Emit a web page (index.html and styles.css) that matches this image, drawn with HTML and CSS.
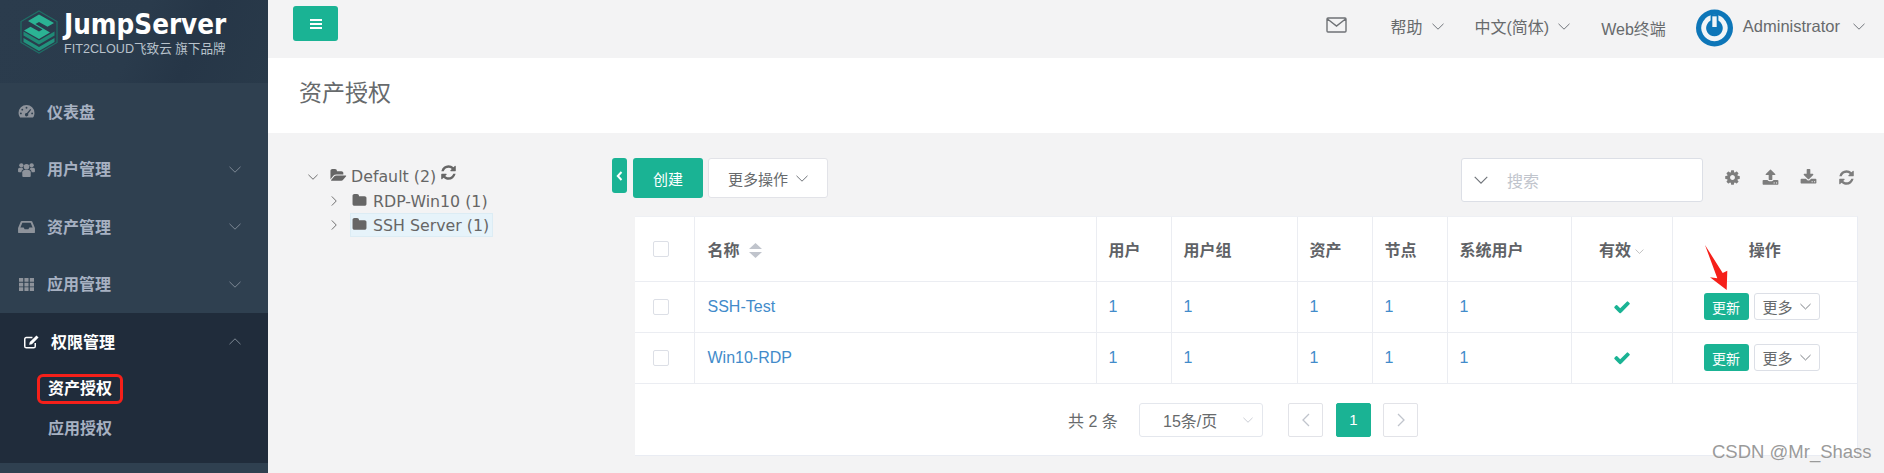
FILE: index.html
```html
<!DOCTYPE html>
<html lang="zh">
<head>
<meta charset="utf-8">
<title>资产授权</title>
<link rel="stylesheet" href="styles.css">
</head>
<body>
<svg class="defs" width="0" height="0">
  <symbol id="down" viewBox="0 0 12 7"><path d="M.5.8 6 6.200 11.500.8" fill="none" stroke="currentColor" stroke-width="1"/></symbol>
  <symbol id="up" viewBox="0 0 12 7"><path d="M.5 6.200 6 .8l5.500 5.400" fill="none" stroke="currentColor" stroke-width="1"/></symbol>
  <symbol id="refresh" viewBox="0 0 1792 1792"><path fill="currentColor" d="M1639 1056q0 5-1 7-64 268-268 434.500t-478 166.500q-146 0-282.500-55t-243.500-157l-129 129q-19 19-45 19t-45-19-19-45v-448q0-26 19-45t45-19h448q26 0 45 19t19 45-19 45l-137 137q71 66 161 102t187 36q134 0 250-65t186-179q11-17 53-117 8-23 30-23h192q13 0 22.500 9.500t9.500 22.500zm25-800v448q0 26-19 45t-45 19h-448q-26 0-45-19t-19-45 19-45l138-138q-148-137-349-137-134 0-250 65t-186 179q-11 17-53 117-8 23-30 23h-199q-13 0-22.500-9.500t-9.500-22.500v-7q65-268 270-434.500t480-166.500q146 0 284 55.500t245 156.500l130-129q19-19 45-19t45 19 19 45z"/></symbol>
  <symbol id="folder" viewBox="0 0 1792 1792"><path fill="currentColor" d="M1728 608v704q0 92-66 158t-158 66h-1216q-92 0-158-66t-66-158v-960q0-92 66-158t158-66h320q92 0 158 66t66 158v32h672q92 0 158 66t66 158z"/></symbol>
  <symbol id="check" viewBox="0 0 1792 1792"><path fill="currentColor" d="M1671 566q0 40-28 68l-724 724-136 136q-28 28-68 28t-68-28l-136-136-362-362q-28-28-28-68t28-68l136-136q28-28 68-28t68 28l294 295 656-657q28-28 68-28t68 28l136 136q28 28 28 68z"/></symbol>
</svg>
<div class="app">
  <aside class="sidebar">
    <div class="brand">
      <svg class="brand-mark" viewBox="0 0 38 44">
        <path d="M19 1 37 11.500v21L19 43 1 32.500v-21z" fill="none" stroke="#1f6f66" stroke-width="1.200"/>
        <path d="M3.500 28l15.500 9 15.500-9v4L19 41 3.500 32z" fill="#22927d"/>
        <path d="M3.500 21.500l15.500 9 15.500-9v4L19 34.500 3.500 25.500z" fill="#1f8a76"/>
        <path d="M19 4.500 34 13l-6.500 3.800L19 12l-3.500 2L30 22.500 24 26 19 29 4 20.500l6.500-3.800L19 21.500l3.500-2L8 11z" fill="#2bb394"/>
      </svg>
      <div class="brand-text">
        <div class="brand-name">JumpServer</div>
        <div class="brand-sub">FIT2CLOUD飞致云 旗下品牌</div>
      </div>
    </div>
    <nav class="menu">
      <a class="menu-item">
        <svg class="menu-icon" viewBox="0 0 18 16"><path fill="currentColor" fill-rule="evenodd" d="M9 1a8.500 8.500 0 0 1 8.500 8.500c0 1.900-.6 3.600-1.600 5H2.100A8.400 8.400 0 0 1 .5 9.500 8.500 8.500 0 0 1 9 1zM9 3a1 1 0 1 0 0 2 1 1 0 0 0 0-2zM4.500 5a1 1 0 1 0 0 2 1 1 0 0 0 0-2zM3 9a1 1 0 1 0 0 2 1 1 0 0 0 0-2zm12 0a1 1 0 1 0 0 2 1 1 0 0 0 0-2zm-2-3.600L9.400 9.600a1.800 1.800 0 1 0 1.300.9L14 6.200z"/></svg>
        <span class="menu-label">仪表盘</span>
      </a>
      <a class="menu-item">
        <svg class="menu-icon" viewBox="0 0 18 16"><g fill="currentColor"><circle cx="9" cy="5" r="3"/><circle cx="3.500" cy="3.500" r="2.300"/><circle cx="14.500" cy="3.500" r="2.300"/><path d="M4.500 15v-4c0-1.500 1-2.500 2.500-2.500h4c1.500 0 2.500 1 2.500 2.500v4c0 .6-.4 1-1 1h-7c-.6 0-1-.4-1-1z"/><path d="M0 10V8c0-1 .7-1.800 1.700-1.800h3.100C5 7 5.400 7.400 5.800 7.800 4.500 8.300 3.700 9.300 3.500 10.800H1c-.6 0-1-.3-1-.8zM18 10V8c0-1-.7-1.800-1.700-1.800h-3.100c-.2.800-.6 1.200-1 1.600 1.300.5 2.100 1.500 2.300 3H17c.6 0 1-.3 1-.8z"/></g></svg>
        <span class="menu-label">用户管理</span>
        <svg class="menu-arrow"><use href="#down"/></svg>
      </a>
      <a class="menu-item">
        <svg class="menu-icon" viewBox="0 0 18 16"><path fill="currentColor" fill-rule="evenodd" d="M4 2h10c.5 0 .9.300 1.100.700L18 9.500V14c0 .6-.4 1-1 1H1c-.6 0-1-.4-1-1V9.500l2.900-6.800C3.100 2.300 3.500 2 4 2zM4.600 4 2.500 9H6l1 2h4l1-2h3.500l-2.100-5z"/></svg>
        <span class="menu-label">资产管理</span>
        <svg class="menu-arrow"><use href="#down"/></svg>
      </a>
      <a class="menu-item">
        <svg class="menu-icon" viewBox="0 0 18 16"><path fill="currentColor" d="M1 1h4.500v4H1zM6.800 1h4.400v4H6.800zM12.500 1H17v4h-4.500zM1 6h4.500v4H1zM6.800 6h4.400v4H6.800zM12.500 6H17v4h-4.500zM1 11h4.500v4H1zM6.800 11h4.400v4H6.800zM12.500 11H17v4h-4.500z"/></svg>
        <span class="menu-label">应用管理</span>
        <svg class="menu-arrow"><use href="#down"/></svg>
      </a>
      <div class="menu-group">
        <a class="menu-item menu-item-active">
          <svg class="menu-icon" viewBox="0 0 18 16"><path fill="none" stroke="currentColor" stroke-width="1.600" d="M13 9.500V13c0 1-.6 1.700-1.700 1.700H3.500c-1 0-1.700-.7-1.700-1.700V5.500c0-1 .7-1.700 1.700-1.700H10"/><path fill="currentColor" d="M14.300 1.500l2.200 2.200L9.500 10.800l-3 .7.700-3z"/></svg>
          <span class="menu-label">权限管理</span>
          <svg class="menu-arrow"><use href="#up"/></svg>
        </a>
        <div class="submenu">
          <a class="submenu-item submenu-current"><span class="highlight">资产授权</span></a>
          <a class="submenu-item">应用授权</a>
        </div>
      </div>
    </nav>
  </aside>
  <main class="main">
    <header class="topbar">
      <button class="menu-toggle"><svg class="bars" viewBox="0 0 14 12"><path fill="#fff" d="M1 1h12v2H1zM1 5h12v2H1zM1 9h12v2H1z"/></svg></button>
      <div class="topbar-right">
        <svg class="mail" viewBox="0 0 21 16"><path fill="none" stroke="currentColor" stroke-width="1.400" d="M2 1h17c.6 0 1 .4 1 1v12c0 .6-.4 1-1 1H2c-.6 0-1-.4-1-1V2c0-.6.4-1 1-1zM1.500 2l9 7 9-7"/></svg>
        <span class="top-link top-help">帮助<svg class="chev"><use href="#down"/></svg></span>
        <span class="top-link top-lang">中文(简体)<svg class="chev"><use href="#down"/></svg></span>
        <span class="top-link top-web">Web终端</span>
        <svg class="avatar" viewBox="0 0 38 38"><circle cx="19" cy="19" r="19" fill="#0d76b8"/><path d="M19 8a11 11 0 1 1-.1 0z" fill="none" stroke="#f1f5f7" stroke-width="5"/><path d="M19 5v13" stroke="#0d76b8" stroke-width="8"/><path d="M19 7v11" stroke="#f1f5f7" stroke-width="4.500"/></svg>
        <span class="top-link top-user">Administrator<svg class="chev chev-user"><use href="#down"/></svg></span>
      </div>
    </header>
    <section class="page-heading"><h2>资产授权</h2></section>
    <section class="content">
      <div class="tree">
        <div class="tree-row tree-root">
          <svg class="tree-arrow"><use href="#down"/></svg>
          <svg class="folder-open" viewBox="0 0 1920 1792"><path fill="currentColor" d="M1879 952q0 31-31 66l-336 396q-43 51-120.500 86.500t-143.500 35.500h-1088q-34 0-60.500-13t-26.500-43q0-31 31-66l336-396q43-51 120.500-86.500t143.500-35.500h1088q34 0 60.500 13t26.500 43zm-343-344v160h-832q-94 0-197 47.500t-164 119.500l-337 396-5 6q0-4-.5-12.500t-.5-12.500v-960q0-92 66-158t158-66h320q92 0 158 66t66 158v32h544q92 0 158 66t66 158z"/></svg>
          <span class="tree-name">Default (2)</span>
          <svg class="tree-refresh"><use href="#refresh"/></svg>
        </div>
        <div class="tree-row tree-child">
          <svg class="tree-arrow tree-arrow-right" viewBox="0 0 12 7"><use href="#down"/></svg>
          <span class="tree-node"><svg class="folder"><use href="#folder"/></svg><span class="tree-name">RDP-Win10 (1)</span></span>
        </div>
        <div class="tree-row tree-child">
          <svg class="tree-arrow tree-arrow-right" viewBox="0 0 12 7"><use href="#down"/></svg>
          <span class="tree-node tree-selected"><svg class="folder"><use href="#folder"/></svg><span class="tree-name">SSH Server (1)</span></span>
        </div>
      </div>
      <div class="panel">
        <div class="toolbar">
          <button class="collapse"><svg viewBox="0 0 7 10" class="collapse-icon"><path d="M5.500 1 1.800 5l3.700 4" fill="none" stroke="#fff" stroke-width="2"/></svg></button>
          <button class="btn btn-create">创建</button>
          <button class="btn btn-more">更多操作<svg class="chev"><use href="#down"/></svg></button>
          <div class="search">
            <svg class="chev chev-search"><use href="#down"/></svg>
            <span class="search-hint">搜索</span>
          </div>
          <div class="tools">
            <svg class="tool" viewBox="0 0 1792 1792"><path fill="currentColor" d="M1152 896q0-106-75-181t-181-75-181 75-75 181 75 181 181 75 181-75 75-181zm512-109v222q0 12-8 23t-20 13l-185 28q-19 54-39 91 35 50 107 138 10 12 10 25t-9 23q-27 37-99 108t-94 71q-12 0-26-9l-138-108q-44 23-91 38-16 136-29 186-7 28-36 28h-222q-14 0-24.500-8.500t-11.500-21.500l-28-184q-49-16-90-37l-141 107q-10 9-25 9-14 0-25-11-126-114-165-168-7-10-7-23 0-12 8-23 15-21 51-66.500t54-70.500q-27-50-41-99l-183-27q-13-2-21-12.500t-8-23.500v-222q0-12 8-23t19-13l186-28q14-46 39-92-40-57-107-138-10-12-10-24 0-10 9-23 26-36 98.500-107.500t94.500-71.500q13 0 26 10l138 107q44-23 91-38 16-136 29-186 7-28 36-28h222q14 0 24.500 8.500t11.500 21.500l28 184q49 16 90 37l142-107q9-9 24-9 13 0 25 10 129 119 165 170 7 8 7 22 0 12-8 23-15 21-51 66.500t-54 70.500q26 50 41 98l183 28q13 2 21 12.500t8 23.500z"/></svg>
            <svg class="tool" viewBox="0 0 1792 1792"><path fill="currentColor" d="M1344 1472q0-26-19-45t-45-19-45 19-19 45 19 45 45 19 45-19 19-45zm256 0q0-26-19-45t-45-19-45 19-19 45 19 45 45 19 45-19 19-45zm128-224v320q0 40-28 68t-68 28h-1472q-40 0-68-28t-28-68v-320q0-40 28-68t68-28h427q21 56 70.500 92t110.500 36h256q61 0 110.500-36t70.500-92h427q40 0 68 28t28 68zm-325-648q-17 40-59 40h-256v448q0 26-19 45t-45 19h-256q-26 0-45-19t-19-45v-448h-256q-42 0-59-40-17-39 14-69l448-448q18-19 45-19t45 19l448 448q31 30 14 69z"/></svg>
            <svg class="tool" viewBox="0 0 1792 1792"><path fill="currentColor" d="M1344 1344q0-26-19-45t-45-19-45 19-19 45 19 45 45 19 45-19 19-45zm256 0q0-26-19-45t-45-19-45 19-19 45 19 45 45 19 45-19 19-45zm128-224v320q0 40-28 68t-68 28h-1472q-40 0-68-28t-28-68v-320q0-40 28-68t68-28h465l135 136q58 56 136 56t136-56l136-136h464q40 0 68 28t28 68zm-325-569q17 41-14 70l-448 448q-18 19-45 19t-45-19l-448-448q-31-29-14-70 17-39 59-39h256v-448q0-26 19-45t45-19h256q26 0 45 19t19 45v448h256q42 0 59 39z"/></svg>
            <svg class="tool"><use href="#refresh"/></svg>
          </div>
        </div>
        <div class="card">
          <table class="grid">
            <colgroup>
              <col class="c-check"><col class="c-name"><col class="c-user"><col class="c-group"><col class="c-asset"><col class="c-node"><col class="c-sys"><col class="c-valid"><col class="c-act">
            </colgroup>
            <thead>
              <tr>
                <th class="cell-check"><span class="checkbox"></span></th>
                <th class="th-name">名称<svg class="sort" viewBox="0 0 13 15"><path fill="#c0c4cc" d="M6.500 0 13 6H0zM6.500 15 0 9h13z"/></svg></th>
                <th>用户</th><th>用户组</th><th>资产</th><th>节点</th><th>系统用户</th>
                <th class="cell-center">有效<svg class="th-chev"><use href="#down"/></svg></th>
                <th class="cell-center">操作</th>
              </tr>
            </thead>
            <tbody>
              <tr>
                <td class="cell-check"><span class="checkbox"></span></td>
                <td class="link th-name">SSH-Test</td><td class="link">1</td><td class="link">1</td><td class="link">1</td><td class="link">1</td><td class="link">1</td>
                <td class="cell-center"><svg class="ok"><use href="#check"/></svg></td>
                <td class="cell-center"><div class="actions"><button class="act-update">更新</button><button class="act-more">更多<svg class="chev"><use href="#down"/></svg></button></div></td>
              </tr>
              <tr>
                <td class="cell-check"><span class="checkbox"></span></td>
                <td class="link th-name">Win10-RDP</td><td class="link">1</td><td class="link">1</td><td class="link">1</td><td class="link">1</td><td class="link">1</td>
                <td class="cell-center"><svg class="ok"><use href="#check"/></svg></td>
                <td class="cell-center"><div class="actions"><button class="act-update">更新</button><button class="act-more">更多<svg class="chev"><use href="#down"/></svg></button></div></td>
              </tr>
            </tbody>
          </table>
          <div class="pager">
            <span class="total">共 2 条</span>
            <div class="size">15条/页<svg class="size-chev"><use href="#down"/></svg></div>
            <button class="page page-nav"><svg class="page-arrow" viewBox="0 0 8 14"><path d="M7 1 1 7l6 6" fill="none" stroke="currentColor" stroke-width="1.300"/></svg></button>
            <button class="page page-on">1</button>
            <button class="page page-nav"><svg class="page-arrow" viewBox="0 0 8 14"><path d="M1 1l6 6-6 6" fill="none" stroke="currentColor" stroke-width="1.300"/></svg></button>
          </div>
        </div>
      </div>
    </section>
  </main>
</div>
<svg class="red-arrow" viewBox="0 0 24 46"><path d="M0 0 17.700 28 22.300 25.700 21.700 45 5 32.300 12.300 33.300z" fill="#f5201a"/></svg>
<div class="watermark">CSDN @Mr_Shass</div>
</body>
</html>
```
FILE: styles.css
```css
* { box-sizing: border-box; }
html, body { margin: 0; height: 473px; overflow: hidden; }
body {
  background: #f3f3f4;
  color: #676a6c;
  font-family: "Liberation Sans", "Noto Sans CJK SC", sans-serif;
  font-size: 16px;
  position: relative;
}
button { font: inherit; cursor: pointer; }
.defs { position: absolute; }
.app { display: flex; height: 473px; }

/* Sidebar */
.sidebar { width: 268px; flex: none; background: #2f4050; display: flex; flex-direction: column; }
.brand {
  height: 83px;
  display: flex;
  align-items: flex-start;
  gap: 6px;
  padding: 10px 0 0 20px;
  background: linear-gradient(115deg, #2b3c4d 0%, #2a3b4c 50%, #263647 70%, #293a4a 100%);
}
.brand-mark { width: 38px; height: 44px; flex: none; }
.brand-name { font: 700 27.500px/28px "DejaVu Sans Condensed", "DejaVu Sans", sans-serif; color: #fff; }
.brand-sub { font-size: 12.600px; line-height: 16px; color: #b8c2cb; margin-top: 3px; white-space: nowrap; }
.menu { display: flex; flex-direction: column; }
.menu-item { height: 57.500px; display: flex; align-items: center; padding-left: 18px; padding-right: 27px; color: #a7b1c2; font-weight: 700; }
.menu-icon { width: 17px; height: 15px; flex: none; color: #8e939b; margin-right: 12px; }
.menu-label { flex: 1; padding-bottom: 2px; }
.menu-arrow { width: 12px; height: 7px; color: #7d8894; }
.menu-group { background: #202c3b; height: 150px; }
.menu-item-active { color: #fff; height: 56px; padding-left: 23px; }
.menu-item-active .menu-icon { color: #fff; margin-right: 11px; }
.menu-item-active .menu-label { padding-bottom: 0; }
.submenu-item { height: 39px; display: flex; align-items: center; padding-left: 48px; color: #a7b1c2; font-weight: 700; }
.submenu-item + .submenu-item { padding-bottom: 2px; }
.submenu-current { color: #fff; }
.highlight { margin-left: -11px; padding: 0 8px; height: 30px; line-height: 24px; border: 3px solid #f5201a; border-radius: 6px; }

/* Top bar */
.main { flex: 1; min-width: 0; display: flex; flex-direction: column; }
.topbar { height: 58px; display: flex; align-items: flex-start; justify-content: space-between; padding: 6px 19px 0 25px; }
.menu-toggle { width: 45px; height: 35px; background: #1ab394; border: 0; border-radius: 3px; display: flex; align-items: center; justify-content: center; padding: 0; }
.bars { width: 14px; height: 12px; }
.topbar-right { display: flex; align-items: center; height: 38px; margin-top: 1px; font-size: 16px; color: #676a6c; }
.mail { width: 21px; height: 16px; color: #6f7276; margin-right: 43px; margin-top: -2px; }
.top-link { display: flex; align-items: center; white-space: nowrap; }
.top-link .chev { margin-left: 9px; }
.top-help { margin-right: 31px; }
.top-lang { margin-right: 31px; }
.top-web { margin-right: 30px; margin-top: 3px; }
.avatar { width: 37px; height: 38px; flex: none; margin-right: 10px; margin-top: 4px; }
.top-user { font-size: 16.500px; }
.chev-user.chev { margin-left: 13px; }
.chev { width: 12px; height: 7px; color: #70747a; flex: none; }

/* Page heading */
.page-heading { height: 75px; background: #fff; display: flex; align-items: center; padding-left: 31px; }
.page-heading h2 { margin: 0 0 10px; font-size: 23px; font-weight: 400; color: #676a6c; }

/* Content */
.content { flex: 1; display: flex; padding: 25px 26px 0 0; }
.tree { width: 344px; flex: none; font-family: "DejaVu Sans", sans-serif; font-size: 15.800px; color: #666; padding-left: 40px; padding-top: 6px; }
.tree-row { display: flex; align-items: center; height: 25px; }
.tree-arrow { width: 10px; height: 6px; color: #555; margin-right: 12px; flex: none; }
.tree-arrow-right { width: 10px; height: 8px; transform: rotate(-90deg); margin-left: 21px; margin-right: 11px; }
.folder-open { width: 17px; height: 15px; color: #666; margin-right: 4px; margin-top: -2px; }
.tree-refresh { width: 17px; height: 17px; color: #666; margin-left: 4px; margin-top: -8px; }
.tree-child { height: 24px; }
.tree-node { display: flex; align-items: center; height: 24px; padding: 0 0 0 2px; width: 143px; white-space: nowrap; }
.folder { width: 15px; height: 15px; color: #666; margin-right: 6px; margin-top: -2px; flex: none; }
.tree-selected { background: #e6f3fa; border: 1px solid #dcecf4; padding-left: 1px; }

/* Toolbar */
.panel { width: 1246px; flex: none; display: flex; flex-direction: column; }
.toolbar { display: flex; align-items: flex-start; height: 44px; }
.collapse { width: 15px; height: 35px; border: 0; background: #1ab394; border-radius: 3px; padding: 0; display: flex; align-items: center; justify-content: center; margin-right: 6px; }
.collapse-icon { width: 7px; height: 10px; }
.btn { height: 40px; border-radius: 3px; font-size: 15px; }
.btn-create { width: 70px; background: #1ab394; color: #fff; border: 0; margin-right: 5px; }
.btn-more { width: 120px; background: #fff; border: 1px solid #e2e3e8; color: #676a6c; display: flex; align-items: center; justify-content: center; padding: 0; }
.btn-more .chev { margin-left: 8px; }
.search { width: 242px; height: 44px; margin-left: 633px; background: #fff; border: 1px solid #dcdfe6; border-radius: 3px; display: flex; align-items: center; padding-left: 12px; }
.chev-search { width: 14px; height: 8px; }
.search-hint { margin-left: 19px; color: #c0c4cc; }
.tools { display: flex; gap: 21px; margin-left: 21px; padding-top: 11px; }
.tool { width: 17px; height: 17px; color: #7d7d7d; }

/* Table */
.card { margin: 14px 0 0 23px; background: #fff; height: 240px; border-right: 1px solid #e9ecf3; border-bottom: 1px solid #e9ecf3; border-top: 1px solid #eef0f4; }
.grid { width: 100%; border-collapse: collapse; table-layout: fixed; }
.c-check { width: 59px; } .c-name { width: 402px; } .c-user { width: 75px; } .c-group { width: 126px; }
.c-asset { width: 75px; } .c-node { width: 75px; } .c-sys { width: 124px; } .c-valid { width: 101px; }
.grid th, .grid td { border: 1px solid #ebedf2; padding: 0 0 0 12px; text-align: left; }
.grid tr > :first-child { border-left: 0; }
.grid tr > :last-child { border-right: 0; }
.grid thead tr > * { border-top: 0; }
.grid th { height: 64px; font-weight: 700; color: #606266; }
.grid td { height: 51px; }
.grid .th-name { padding-left: 13px; }
.grid .cell-check { padding-left: 18px; }
.grid .cell-center { text-align: center; padding: 0; }
.checkbox { display: block; width: 16px; height: 16px; border: 1px solid #dcdfe6; border-radius: 2px; background: #fff; }
.sort { width: 13px; height: 15px; margin-left: 9px; vertical-align: -2px; }
.th-chev { width: 9px; height: 5px; margin-left: 4px; color: #aaa; vertical-align: 2px; }
.link { color: #428bca; }
.ok { width: 18px; height: 18px; color: #1ab394; vertical-align: middle; }
.actions { display: flex; gap: 5px; padding-left: 31px; }
.act-update { width: 45px; height: 27px; padding: 0; border: 0; border-radius: 3px; background: #1ab394; color: #fff; font-size: 14px; }
.act-more { width: 66px; height: 27px; padding: 0; background: #fff; border: 1px solid #dcdfe6; border-radius: 3px; color: #676a6c; font-size: 15px; display: flex; align-items: center; justify-content: center; }
.act-more .chev { margin-left: 7px; width: 11px; }

/* Pagination */
.pager { display: flex; align-items: center; height: 72px; padding: 0 0 0 433px; }
.total { width: 71px; white-space: nowrap; }
.size { width: 124px; height: 34px; border: 1px solid #e4e7ed; border-radius: 3px; display: flex; align-items: center; padding-left: 23px; position: relative; margin-right: 25px; }
.size-chev { width: 10px; height: 6px; color: #c0c4cc; position: absolute; right: 9px; top: 13px; }
.page { width: 35px; height: 34px; padding: 0; background: #fff; border: 1px solid #e2e3e8; border-radius: 2px; display: flex; align-items: center; justify-content: center; color: #c0c4cc; margin-right: 13px; }
.page-on { background: #1ab394; color: #fff; font-size: 15px; border-color: #1ab394; margin-right: 12px; }
.page-arrow { width: 8px; height: 14px; }

/* Annotations laid over the screenshot */
.red-arrow { position: absolute; left: 1705px; top: 245px; width: 24px; height: 46px; }
.watermark { position: absolute; left: 1712px; top: 441px; font-size: 18.500px; color: #9a9a9a; white-space: nowrap; text-shadow: 0 0 1px #fff; }
```
